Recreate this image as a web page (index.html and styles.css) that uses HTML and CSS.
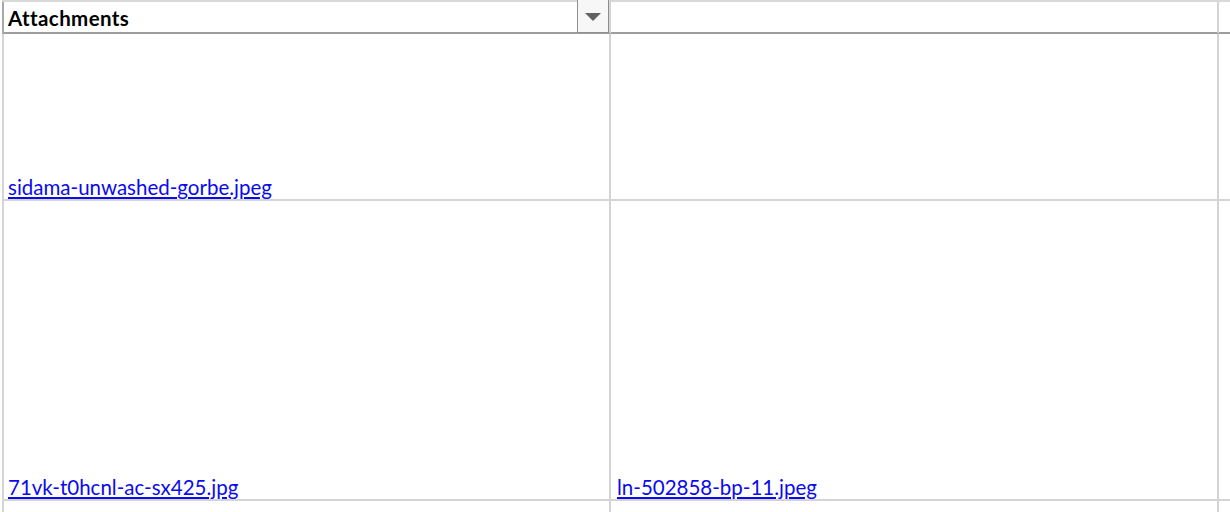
FILE: index.html
```html
<!DOCTYPE html>
<html lang="en">
<head>
    <meta charset="UTF-8">
    <title>Attachments</title>
    <link rel="stylesheet" href="styles.css">
</head>
<body>
    <div class="sheet">
        <!-- header row -->
        <div class="cell head first">
            <span class="title">Attachments</span>
            <span class="filter-btn"><span class="arrow"></span></span>
        </div>
        <div class="cell head"></div>
        <div class="cell head last"></div>

        <!-- row 1 -->
        <div class="cell"><a href="#">sidama-unwashed-gorbe.jpeg</a></div>
        <div class="cell col2"></div>
        <div class="cell last"></div>

        <!-- row 2 -->
        <div class="cell"><a href="#">71vk-t0hcnl-ac-sx425.jpg</a></div>
        <div class="cell col2"><a href="#">ln-502858-bp-11.jpeg</a></div>
        <div class="cell last"></div>

        <!-- row 3 -->
        <div class="cell"></div>
        <div class="cell col2"></div>
        <div class="cell last"></div>
    </div>
</body>
</html>
```

FILE: styles.css
```css
body {
    margin: 0;
    padding: 0;
    background: white;
    font-family: 'Lato', sans-serif;
    overflow: hidden;
}

.sheet {
    margin-left: 2px;
    border-left: 2px solid #d4d4d4;
    border-top: 2px solid #d9d9d9;
    display: grid;
    grid-template-columns: 607px 608px 1fr;
    grid-template-rows: 32px 167px 300px 20px;
}

.cell {
    border-right: 2px solid #d4d4d4;
    border-bottom: 2px solid #d4d4d4;
    display: flex;
    align-items: flex-end;
    padding: 0 4px 0 4px;
    font-size: 20.5px;
    line-height: 24px;
}

.cell.col2 {
    padding-left: 6px;
}

.cell.last {
    border-right: none;
}

.head {
    border-bottom-color: #9e9e9e;
    align-items: center;
    justify-content: space-between;
    padding: 0 0 0 4px;
}

/* header row has a darker left edge */
.head.first {
    box-shadow: -2px 0 0 #a8a8a8;
}

.title {
    font-weight: bold;
    color: #000;
    letter-spacing: 0.4px;
    padding-top: 2px;
}

.filter-btn {
    width: 30px;
    height: 32px;
    margin-top: -2px;
    border: 1px solid #8f8f8f;
    background: #f7f7f7;
    display: flex;
    align-items: center;
    justify-content: center;
}

.arrow {
    width: 0;
    height: 0;
    border-left: 8px solid transparent;
    border-right: 8px solid transparent;
    border-top: 8px solid #626262;
    margin-top: 2px;
}

a {
    color: #0a0af0;
    text-decoration: underline;
}
```
